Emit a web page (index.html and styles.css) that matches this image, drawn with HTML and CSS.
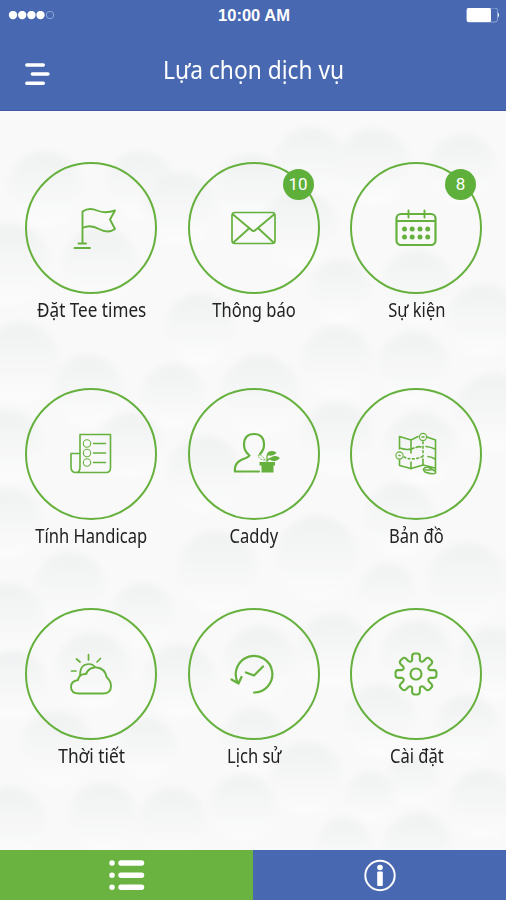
FILE: index.html
```html
<!DOCTYPE html>
<html lang="vi">
<head>
<meta charset="utf-8">
<title>Lựa chọn dịch vụ</title>
<link rel="stylesheet" href="styles.css">
</head>
<body>
<header class="header">
  <div class="status">
    <svg class="signal" width="48" height="10" viewBox="0 0 48 10"><g fill="#fff"><circle cx="5" cy="4" r="4.200"/><circle cx="14.200" cy="4" r="4.200"/><circle cx="23.400" cy="4" r="4.200"/><circle cx="32.500" cy="4" r="4.200"/></g><circle cx="42" cy="4" r="3.700" fill="none" stroke="#8fa8da"/></svg>
    <span class="time">10:00 AM</span>
    <svg class="battery" width="34" height="16" viewBox="0 0 34 16"><rect x=".5" y="0" width="31" height="14" rx="2.500" fill="none" stroke="#8fa8da"/><rect x="1" y="0" width="24" height="14" rx="1.500" fill="#fff"/><path d="M32 4.500q2 2.500 0 5z" fill="#fff"/></svg>
  </div>
  <div class="titlebar">
    <svg class="menu" width="26" height="26" viewBox="0 0 26 26" stroke="#fff" stroke-width="3.400" stroke-linecap="round"><path d="M2.800 4h16.500M8.300 13H24M2.800 22.300h16.500"/></svg>
    <h1 class="title">Lựa chọn dịch vụ</h1>
  </div>
</header>
<main class="main">
  <svg class="texture" viewBox="0 111 506 739" preserveAspectRatio="none">
    <defs>
      <linearGradient id="ball" x1="0" y1="0" x2="0" y2="1"><stop offset="0" stop-color="#e9ebeb"/><stop offset=".5" stop-color="#f4f5f5"/><stop offset="1" stop-color="#fff"/></linearGradient>
      <filter id="soft" x="-5%" y="-5%" width="110%" height="110%"><feGaussianBlur stdDeviation="3"/></filter>
    </defs>
    <g fill="url(#ball)" filter="url(#soft)" opacity=".55">
      <circle cx="310" cy="163" r="36"/><circle cx="373" cy="167" r="38"/><circle cx="462" cy="168" r="34"/><circle cx="45" cy="189" r="38"/><circle cx="140" cy="185" r="34"/><circle cx="180" cy="208" r="36"/>
      <circle cx="250" cy="190" r="36"/><circle cx="10" cy="264" r="40"/><circle cx="100" cy="265" r="38"/><circle cx="300" cy="228" r="38"/><circle cx="417" cy="286" r="36"/><circle cx="340" cy="292" r="32"/><circle cx="483" cy="320" r="36"/><circle cx="200" cy="329" r="36"/>
      <circle cx="20" cy="362" r="40"/><circle cx="337" cy="362" r="36"/><circle cx="413" cy="367" r="36"/><circle cx="88" cy="390" r="35"/><circle cx="173" cy="396" r="32"/><circle cx="260" cy="395" r="40"/><circle cx="493" cy="412" r="38"/>
      <circle cx="337" cy="438" r="36"/><circle cx="7" cy="446" r="36"/><circle cx="420" cy="448" r="36"/><circle cx="130" cy="445" r="32"/><circle cx="205" cy="474" r="38"/><circle cx="400" cy="519" r="36"/><circle cx="7" cy="523" r="35"/>
      <circle cx="317" cy="558" r="42"/><circle cx="217" cy="571" r="40"/><circle cx="467" cy="583" r="40"/><circle cx="70" cy="588" r="36"/><circle cx="387" cy="592" r="28"/><circle cx="7" cy="620" r="37"/><circle cx="143" cy="615" r="32"/>
      <circle cx="333" cy="650" r="36"/><circle cx="417" cy="657" r="36"/><circle cx="93" cy="671" r="38"/><circle cx="260" cy="662" r="36"/><circle cx="493" cy="664" r="36"/><circle cx="180" cy="681" r="36"/><circle cx="13" cy="684" r="34"/>
      <circle cx="380" cy="721" r="36"/><circle cx="467" cy="727" r="32"/><circle cx="57" cy="748" r="37"/><circle cx="253" cy="741" r="32"/><circle cx="147" cy="748" r="30"/><circle cx="307" cy="778" r="36"/><circle cx="413" cy="780" r="26"/>
      <circle cx="10" cy="823" r="36"/><circle cx="103" cy="818" r="35"/><circle cx="173" cy="822" r="34"/><circle cx="243" cy="807" r="33"/><circle cx="370" cy="797" r="25"/><circle cx="344" cy="845" r="27"/><circle cx="418" cy="847" r="34"/><circle cx="483" cy="804" r="34"/>
    </g>
  </svg>
  <div class="grid">
    <a class="item"><span class="ring"><svg class="icon" viewBox="-24 -24 48 48"><path d="M-8.500 15V-16.500Q-2-21 6-17.500T24-17.500L19-8.500 24 1Q17 6 8 1T-8.500 0M-12.500 15.500H-5M-16.500 20H-1"/></svg></span><span class="label wide">Đặt Tee times</span></a>
    <a class="item"><span class="ring"><svg class="icon" viewBox="-24 -24 48 48"><rect x="-22" y="-15.500" width="43" height="31" rx="3" stroke-width="1.700"/><path d="M-21-13.500-2.500 2Q-.5 4 1.500 2L20-13.500M-20 14-4.500 0M19 14 4 0"/></svg><b class="badge">10</b></span><span class="label">Thông báo</span></a>
    <a class="item"><span class="ring"><svg class="icon" viewBox="-24 -24 48 48"><rect x="-19.500" y="-14" width="39" height="31" rx="4.500" stroke-width="2.200"/><path d="M-19-7H19M-7.500-17.500V-10.500M8.500-17.500V-10.500"/><g class="solid"><circle cx="-11.500" cy="1" r="2.500"/><circle cx="-3.800" cy="1" r="2.500"/><circle cx="4" cy="1" r="2.500"/><circle cx="11.700" cy="1" r="2.500"/><circle cx="-11.500" cy="9" r="2.500"/><circle cx="-3.800" cy="9" r="2.500"/><circle cx="4" cy="9" r="2.500"/><circle cx="11.700" cy="9" r="2.500"/></g></svg><b class="badge">8</b></span><span class="label">Sự kiện</span></a>
    <a class="item"><span class="ring"><svg class="icon thin" viewBox="-24 -24 48 48"><path d="M-11-19.500H19.500V14Q19.500 18.500 15 18.500H-15Q-20 18.500-20 13V-.5H-11V13Q-11 18.500-15 18.500M-11 0V-19.500"/><path d="M2.500-10.500H14.500M2.500-1H14.500M2.500 8.500H14.500"/><g stroke-width="1.100"><circle cx="-4" cy="-10.500" r="3.700"/><circle cx="-4" cy="-1" r="3.700"/><circle cx="-4" cy="8.500" r="3.700"/></g></svg></span><span class="label">Tính Handicap</span></a>
    <a class="item"><span class="ring"><svg class="icon" viewBox="-24 -24 48 48"><path d="M5 17.500H-19Q-20 9-12 5.500Q-5 3-4.500 1.500Q-10-3-10-9Q-10-20 0-20T10-9Q10-4 6 0" stroke-width="2.200"/><path class="solid" d="M5.500 8H21V11.500H19.500V18.500H7.500V11.500H5.500Z"/><path d="M13 8V2.500Q13 0 16-.5M13 7Q15 4 19 4" stroke-width="1.300"/><path class="solid" d="M13 1Q13-3 18-3Q22-2.500 22.500-1Q19 3 13 1M16 6Q17 2 21 2Q24 2 26 4Q22 9 16 6"/><path d="M11 6Q5 6 4 1Q9 1 11 6" stroke-width=".8" stroke-dasharray="1.500 1.500"/></svg></span><span class="label">Caddy</span></a>
    <a class="item"><span class="ring"><svg class="icon thin" viewBox="-24 -24 48 48"><path d="M-16.500-5V-17.500L-5-14 2-17.500M11-17 19.500-14V19Q17 21 9 18Q5 14 12 13L19 17M-16.500 6V11.500L-5 14.500 7 11 19 14M-5-14V-1M-5 8V15M7 5V11M-16-6Q-8-3-2-6M0-6.500Q3-8 5-7M10-7.500Q15-7 19-5M12 2.500Q16 3 19 5"/><path d="M7-12V2M-12 3Q-4 7 7 2.500" stroke-dasharray="1.800 2.600"/><g stroke-width="1.100"><circle cx="7" cy="-17" r="3.600"/><circle cx="-16.500" cy="1.500" r="3.600"/></g><path d="M6-17H8M-17 1.500H-16M9 16H15"/></svg></span><span class="label">Bản đồ</span></a>
    <a class="item"><span class="ring"><svg class="icon" viewBox="-24 -24 48 48"><path d="M-12 19.500Q-20 19.500-20 13Q-20 7-13 6Q-12 0-5.500 0Q-1-7.500 6-6.500Q14-5.500 15.500 3Q20 7 20 12Q20 19.500 12 19.500Z"/><path d="M-11 1Q-11-10-2-10Q2-10 4-7M-4.500 0Q-4-5 3-6.500M-2.500-14V-19.500M-11-12-14.500-15M6-12 9.500-15.500M-15-3H-19.500" stroke-width="1.700"/></svg></span><span class="label weather">Thời tiết</span></a>
    <a class="item"><span class="ring"><svg class="icon" viewBox="-24 -24 48 48"><path d="M0 18.500A18.300 18.300 0 1 0-16.500 8M-22.500 5.500-15.500 9.500-12.500 3M-8-1.500 0 1.500 9-7.500" stroke-width="2.200"/></svg></span><span class="label">Lịch sử</span></a>
    <a class="item"><span class="ring"><svg class="icon" viewBox="-24 -24 48 48"><circle r="5.500" stroke-width="2.100"/><path id="gear" stroke-width="2.100"/></svg></span><span class="label">Cài đặt</span></a>
  </div>
</main>
<nav class="tabs">
  <a class="tab active"><svg width="38" height="34" viewBox="0 0 38 34" stroke="#fff" stroke-width="5.500" stroke-linecap="round"><path d="M4 5h0M4 17.200h0M4 29.300h0M13 5H33.500M13 17.200H33.500M13 29.300H33.500"/></svg></a>
  <a class="tab"><svg width="34" height="34" viewBox="-17 -17 34 34" fill="#fff"><circle r="14.700" cy=".5" fill="none" stroke="#fff" stroke-width="2"/><circle cy="-7.500" r="2.800"/><rect x="-2.800" y="-3.500" width="5.600" height="14.500" rx="1"/></svg></a>
</nav>
<script src="gear.js"></script>
</body>
</html>
```
FILE: gear.js
```js
// Gear outline: eight rounded teeth spaced evenly around the hub.
const step = Math.PI / 4;
const point = (r, a) => `${(r * Math.sin(a)).toFixed(2)} ${(-r * Math.cos(a)).toFixed(2)}`;
let d = "";
for (let i = 0; i < 8; i++) {
  const a = i * step;
  d += (i ? "L" : "M") + point(14.5, a - 0.27);
  d += "L" + point(18.5, a - 0.21) + "Q" + point(20.6, a - 0.18) + " " + point(20.5, a - 0.07);
  d += "L" + point(20.5, a + 0.07) + "Q" + point(20.6, a + 0.18) + " " + point(18.5, a + 0.21);
  d += "L" + point(14.5, a + 0.27) + "Q" + point(12.5, a + step / 2) + " " + point(14.5, a + step - 0.27);
}
document.getElementById("gear").setAttribute("d", d + "Z");
```
FILE: styles.css
```css
* { box-sizing: border-box; }
body { margin: 0; width: 506px; height: 900px; display: flex; flex-direction: column; overflow: hidden; font-family: "Noto Sans", sans-serif; background: #f9f9fa; }
.header { height: 111px; background: #4869b1; color: #fff; border-bottom: 1px solid #4059a5; }
.status { height: 30px; display: grid; grid-template-columns: 1fr auto 1fr; align-items: center; padding: 0 6px 0 8px; }
.time { font: bold 16.5px/31px "Liberation Sans", sans-serif; }
.battery { justify-self: end; }
.titlebar { height: 80px; display: grid; grid-template-columns: 1fr auto 1fr; padding: 0 24px; align-items: center; }
.menu { margin-top: 7px; }
.title { margin: -2px 0 0; font-size: 25px; font-weight: 400; line-height: 80px; width: 180px; white-space: nowrap; transform: scaleX(.91); transform-origin: left; }
.main { flex: 1; min-height: 0; position: relative; }
.texture { position: absolute; inset: 0; width: 100%; height: 100%; }
.grid { position: relative; display: grid; grid-template-columns: repeat(3, 162.5px); grid-template-rows: 226px 220px 200px; justify-content: center; padding: 51px 0 0 1px; }
.item { display: flex; flex-direction: column; align-items: center; }
.ring { position: relative; width: 132px; height: 132px; flex: none; border: 2px solid #66b13d; border-radius: 50%; display: grid; place-items: center; }
.icon { width: 48px; height: 48px; overflow: visible; fill: none; stroke: #66b13d; stroke-width: 1.9; stroke-linecap: round; stroke-linejoin: round; }
.thin { stroke-width: 1.6; }
.icon .solid { fill: #66b13d; stroke: none; }
.badge { position: absolute; right: 4px; top: 5px; width: 31px; height: 31px; border-radius: 50%; background: #5fb03b; color: #fff; font: 17px/31px Roboto, sans-serif; text-align: center; }
.label { margin: 4px 0 0 1px; font-size: 19px; line-height: 25px; color: #222; white-space: nowrap; transform: scaleX(.87); }
.wide { transform: scaleX(.9); }
.weather { transform: scaleX(.91); }
.tabs { height: 50px; display: flex; }
.tab { flex: 1; display: grid; place-items: center; background: #4869b1; }
.active { background: #6ab341; }
```
